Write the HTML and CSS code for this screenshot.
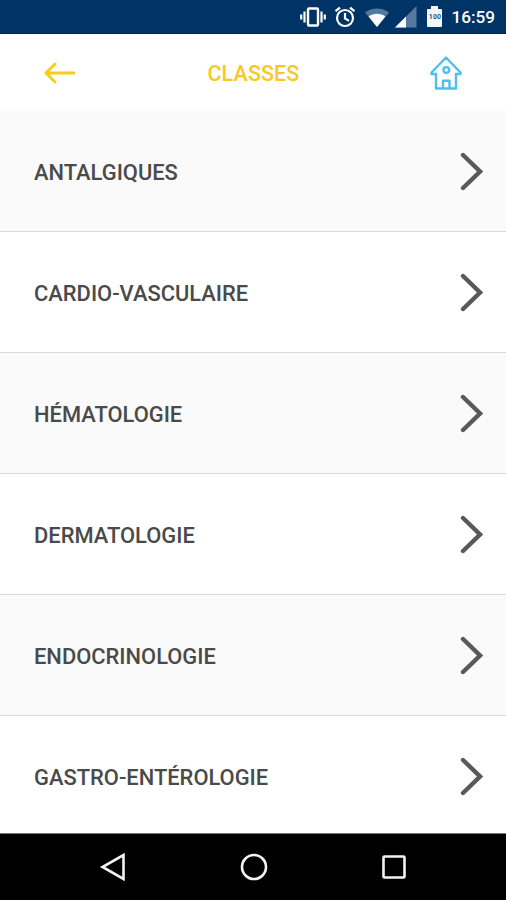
FILE: index.html
```html
<!DOCTYPE html>
<html lang="fr">
<head>
  <meta charset="utf-8">
  <title>Classes</title>
  <link rel="stylesheet" href="styles.css">
</head>
<body>
  <!-- Android status bar -->
  <div class="status-bar">
    <svg class="vibrate" width="26" height="22" viewBox="0 0 26 22">
      <rect x="8" y="2.500" width="10" height="17" rx="1" fill="none" stroke="#fff" stroke-width="2.400"/>
      <path d="M4.500 5.500v11M21.500 5.500v11M1.200 8.500v5M24.800 8.500v5" stroke="#fff" stroke-width="2.200"/>
    </svg>
    <svg class="alarm" width="22" height="22" viewBox="0 0 22 22" fill="none" stroke="#fff" stroke-width="2.200">
      <circle cx="11" cy="12" r="8"/>
      <path d="M1.500 5.200L6 1.600M20.500 5.200L16 1.600M11 7v5.500l4 2.400"/>
    </svg>
    <svg class="wifi" width="24" height="20" viewBox="0 0 24 20">
      <path d="M0 4.500C7-1 17-1 24 4.500L12 19z" fill="#54789f"/>
      <path d="M3.600 8.500C8.500 4.800 15.500 4.800 20.400 8.500L12 19z" fill="#fff"/>
    </svg>
    <svg class="signal" width="22" height="22" viewBox="0 0 22 22">
      <path d="M0 21.500L21.500 0v21.500z" fill="#54789f"/>
      <path d="M0 21.500L11 10.500v11z" fill="#fff"/>
    </svg>
    <div class="battery"><span>100</span></div>
    <span class="clock">16:59</span>
  </div>

  <header class="header">
    <svg width="32" height="22" viewBox="0 0 32 22" fill="none" stroke="#f8cd17" stroke-width="2.900" stroke-linecap="round" stroke-linejoin="round">
      <path d="M30 11H2M11 2L2 11l9 9"/>
    </svg>
    <h1>CLASSES</h1>
    <svg width="34" height="36" viewBox="0 0 34 36" fill="none" stroke="#4fc0ed" stroke-width="2.400" stroke-linejoin="round">
      <path d="M17 2.500L2.500 17.500V19H7v14.500h20V19h4.500v-1.500zM14 33.500v-7.800h6.500v7.800"/>
      <circle cx="17.300" cy="15" r="2.900"/>
    </svg>
  </header>

  <ul class="list">
    <li>
      <span>ANTALGIQUES</span>
      <svg class="chevron" width="24" height="40" viewBox="0 0 24 40"><path d="M4 3l17 16.500L4 36"/></svg>
    </li>
    <li>
      <span>CARDIO-VASCULAIRE</span>
      <svg class="chevron" width="24" height="40" viewBox="0 0 24 40"><path d="M4 3l17 16.500L4 36"/></svg>
    </li>
    <li>
      <span>HÉMATOLOGIE</span>
      <svg class="chevron" width="24" height="40" viewBox="0 0 24 40"><path d="M4 3l17 16.500L4 36"/></svg>
    </li>
    <li>
      <span>DERMATOLOGIE</span>
      <svg class="chevron" width="24" height="40" viewBox="0 0 24 40"><path d="M4 3l17 16.500L4 36"/></svg>
    </li>
    <li>
      <span>ENDOCRINOLOGIE</span>
      <svg class="chevron" width="24" height="40" viewBox="0 0 24 40"><path d="M4 3l17 16.500L4 36"/></svg>
    </li>
    <li>
      <span>GASTRO-ENTÉROLOGIE</span>
      <svg class="chevron" width="24" height="40" viewBox="0 0 24 40"><path d="M4 3l17 16.500L4 36"/></svg>
    </li>
  </ul>

  <!-- Android navigation bar -->
  <nav class="nav-bar">
    <svg width="28" height="28" viewBox="0 0 28 28"><path d="M24.500 2v24L3.500 14z"/></svg>
    <svg width="28" height="28" viewBox="0 0 28 28"><circle cx="14" cy="14" r="12"/></svg>
    <svg width="28" height="28" viewBox="0 0 28 28"><rect x="3.500" y="3.500" width="21" height="21" rx="1"/></svg>
  </nav>
</body>
</html>
```

FILE: styles.css
```css
* {
  box-sizing: border-box;
}

body {
  font-family: Roboto, "Liberation Sans", sans-serif;
  margin: 0;
  height: 900px;
  display: flex;
  flex-direction: column;
  overflow: hidden;
  background: #fff;
}

.status-bar {
  height: 34px;
  flex: none;
  display: flex;
  align-items: center;
  justify-content: flex-end;
  padding-right: 11px;
  background: #003466;
  border-bottom: 1px solid #10205c;
  color: #fff;
}

.vibrate {
  margin-top: 1px;
}

.alarm {
  margin-left: 8px;
  margin-top: 1px;
}

.wifi {
  margin-left: 9px;
  margin-top: 3px;
}

.signal {
  margin-left: 6px;
  margin-top: 1px;
}

.battery {
  position: relative;
  width: 15px;
  height: 18px;
  margin: 3px 0 0 10px;
  border-radius: 1px;
  background: #f4f7fa;
  color: #33557c;
  font-size: 7px;
  font-weight: 700;
  line-height: 17px;
  text-align: center;
}

/* battery cap */
.battery::before {
  content: "";
  position: absolute;
  left: 4px;
  top: -3px;
  width: 7px;
  height: 3px;
  background: #f4f7fa;
}

.clock {
  margin-left: 9px;
  margin-top: 1px;
  font-size: 17.2px;
  font-weight: 500;
  line-height: 20px;
}

.header {
  height: 77px;
  flex: none;
  display: grid;
  grid-template-columns: 1fr auto 1fr;
  align-items: center;
  padding: 0 43px 0 44px;
}

.header svg:last-child {
  justify-self: end;
}

h1 {
  margin: 2px 0 0;
  color: #f8c922;
  font-size: 21.5px;
  font-weight: 500;
  letter-spacing: 0.1px;
}

.list {
  flex: 1;
  min-height: 0;
  overflow: hidden;
  margin: 0;
  padding: 0;
  list-style: none;
}

.list li {
  height: 121px;
  display: flex;
  align-items: center;
  justify-content: space-between;
  padding: 2px 23px 0 34px;
  border-bottom: 1px solid #dadada;
  color: #4a4a4a;
  font-size: 21.9px;
  font-weight: 500;
}

.list li:nth-child(odd) {
  background: #fafafa;
}

.chevron {
  fill: none;
  stroke: #595959;
  stroke-width: 4.4;
  stroke-linecap: round;
}

.nav-bar {
  height: 67px;
  flex: none;
  display: flex;
  justify-content: space-between;
  align-items: center;
  padding: 0 98px 0 99px;
  border-top: 1px solid #777;
  background: #000;
}

.nav-bar svg {
  fill: none;
  stroke: #f2f2f2;
  stroke-width: 2.600;
}
```
